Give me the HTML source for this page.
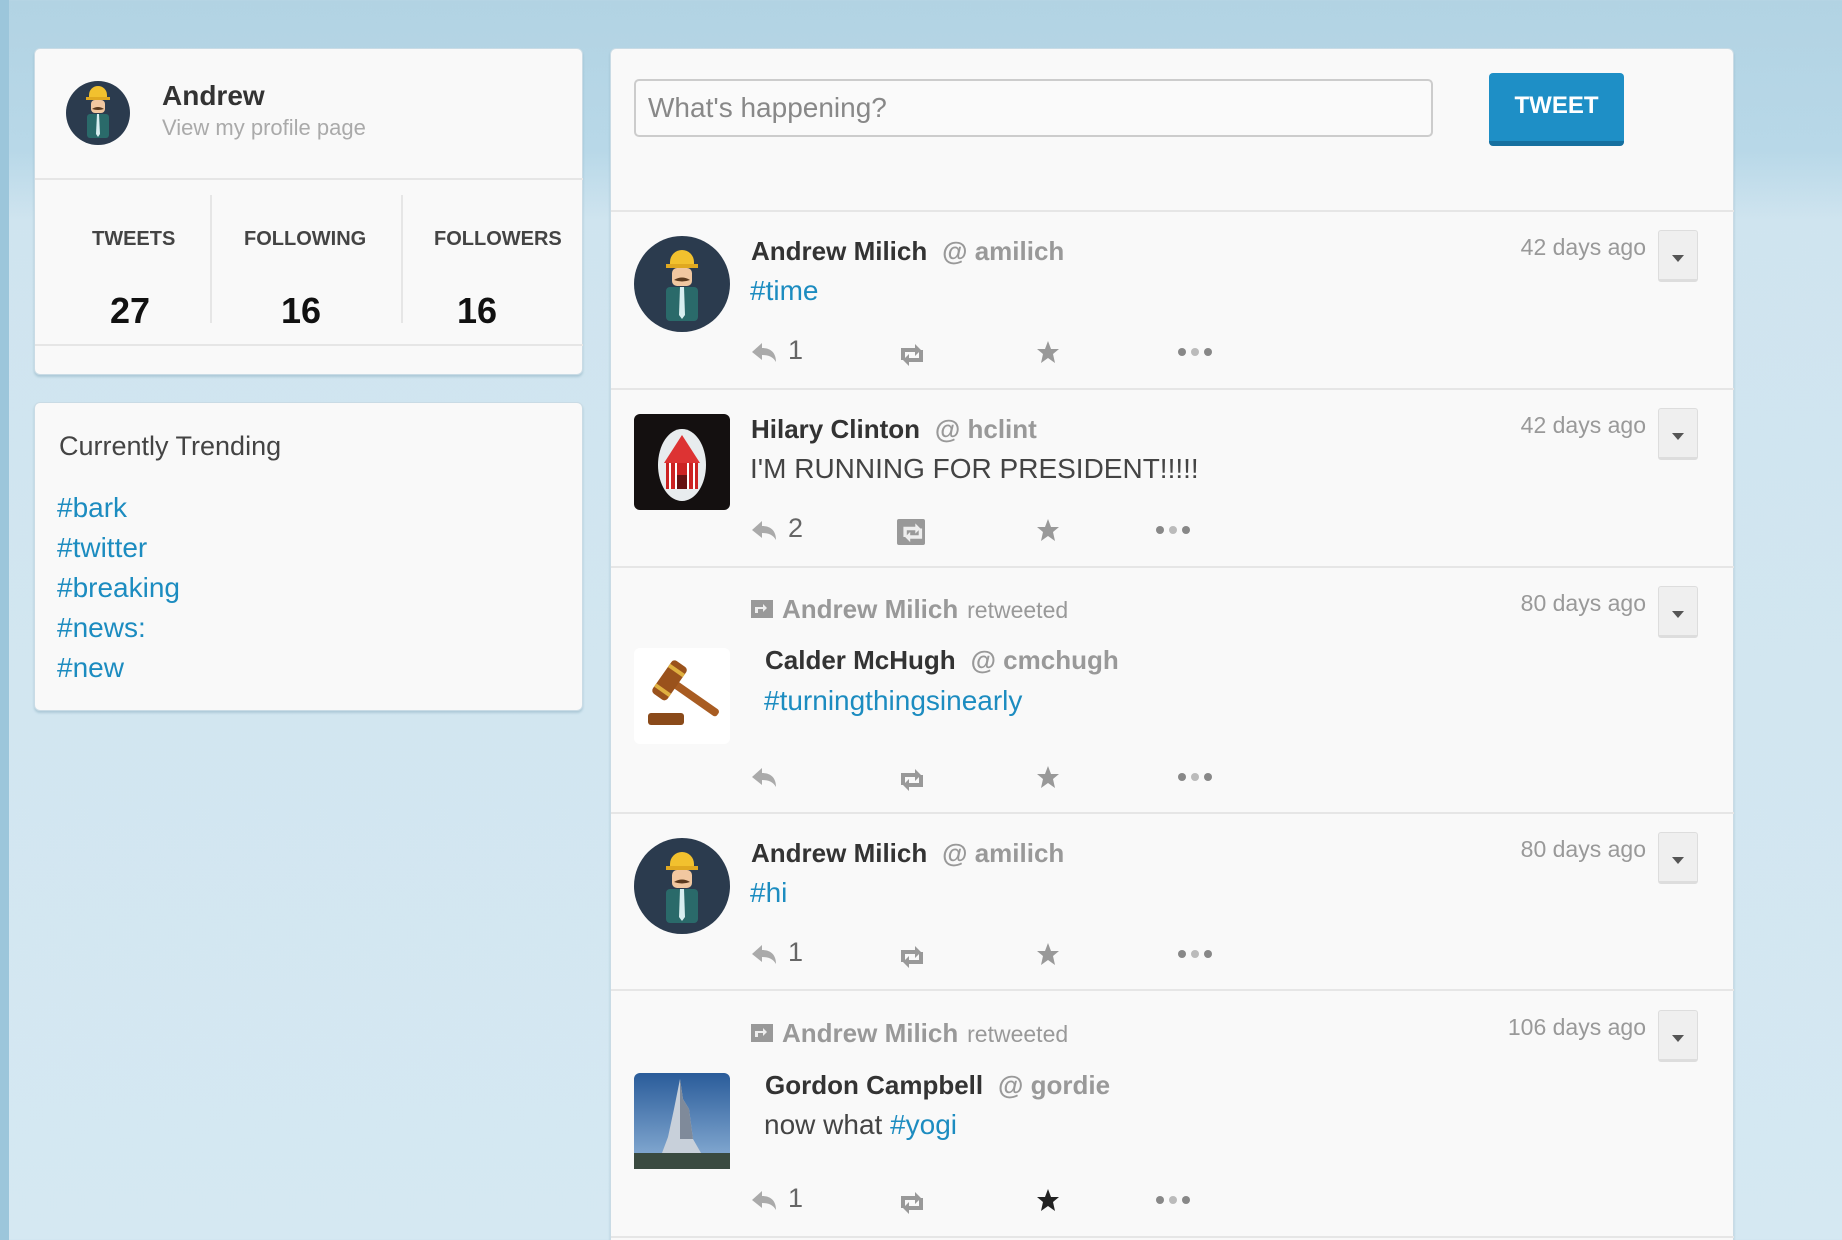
<!DOCTYPE html>
<html style="overflow:hidden;width:1842px;height:1240px"><head><meta charset="utf-8"><style>
*{margin:0;padding:0;box-sizing:border-box}
body{width:1842px;height:1240px;overflow:hidden;font-family:"Liberation Sans",Arial,sans-serif;background:linear-gradient(#b2d3e3 0,#b8d8e8 150px,#cfe4ef 220px,#d5e8f2 1240px);position:relative}
.a{position:absolute;white-space:nowrap}
.card{position:absolute;background:#f9f9f9;border:1px solid #c9dbe5;border-radius:6px;box-shadow:0 2px 2px rgba(120,160,180,.4)}
.hl{position:absolute;height:2px;background:#e6e6e6}
.vl{position:absolute;width:2px;background:#e6e6e6}
.blue{color:#1c8cc0}
.name{font-weight:bold;font-size:26px;color:#333}
.handle{font-weight:bold;font-size:26px;color:#999;margin-left:6px}
.time{font-size:23px;color:#999;text-align:right}
.dd{position:absolute;width:40px;height:52px;background:#efefef;border:1px solid #ddd;border-bottom:3px solid #ddd;border-radius:3px}
.dd:after{content:"";position:absolute;left:13px;top:24px;border-left:6px solid transparent;border-right:6px solid transparent;border-top:7px solid #555}
.cnt{font-size:27px;color:#666}
</style></head><body>
<div class="a" style="left:0;top:0;width:9px;height:1240px;background:#9cc6db"></div>

<div class="card" style="left:34px;top:48px;width:549px;height:327px"></div>
<svg class="a" style="left:66px;top:81px" width="64" height="64" viewBox="0 0 64 64"><circle cx="32" cy="32" r="32" fill="#2b3b4e"/><path d="M23 14a9 9 0 0118 0v3H23z" fill="#f2c12e"/><rect x="20" y="16" width="24" height="3" fill="#e0a820"/><rect x="25" y="19" width="14" height="13" rx="4" fill="#f1c7a0"/><path d="M26 28q6-4 12 0q-6 2-12 0" fill="#5b3a1e"/><rect x="21" y="33" width="22" height="24" rx="3" fill="#2a6a6a"/><path d="M31 33h2l1 20-2 3-2-3z" fill="#d8eef0"/></svg>
<div class="a" style="left:162px;top:80px;font-size:28px;font-weight:bold;color:#333">Andrew</div>
<div class="a" style="left:162px;top:115px;font-size:22px;color:#aaa">View my profile page</div>
<div class="hl" style="left:35px;top:178px;width:548px"></div>
<div class="vl" style="left:210px;top:195px;height:128px"></div>
<div class="vl" style="left:401px;top:195px;height:128px"></div>
<div class="a" style="left:92px;top:228px;font-size:20px;font-weight:bold;color:#444">TWEETS</div>
<div class="a" style="left:244px;top:228px;font-size:20px;font-weight:bold;color:#444">FOLLOWING</div>
<div class="a" style="left:434px;top:228px;font-size:20px;font-weight:bold;color:#444">FOLLOWERS</div>
<div class="a" style="left:110px;top:290px;font-size:36px;font-weight:bold;color:#111">27</div>
<div class="a" style="left:281px;top:290px;font-size:36px;font-weight:bold;color:#111">16</div>
<div class="a" style="left:457px;top:290px;font-size:36px;font-weight:bold;color:#111">16</div>
<div class="hl" style="left:35px;top:344px;width:548px"></div>

<div class="card" style="left:34px;top:402px;width:549px;height:309px"></div>
<div class="a" style="left:59px;top:431px;font-size:27px;color:#444">Currently Trending</div>
<div class="a blue" style="left:57px;top:488px;font-size:28px;line-height:40px">#bark<br>#twitter<br>#breaking<br>#news:<br>#new</div>

<div class="card" style="left:610px;top:48px;width:1124px;height:1200px"></div>
<div class="a" style="left:634px;top:79px;width:799px;height:58px;border:2px solid #ccc;border-radius:5px;background:#fafafa;font-size:28px;color:#888;padding:11px 12px">What's happening?</div>
<div class="a" style="left:1489px;top:73px;width:135px;height:73px;background:#1e8fc6;border-bottom:5px solid #1670a0;border-radius:4px;color:#fff;font-weight:bold;font-size:24px;text-align:center;line-height:66px">TWEET</div>

<div class="hl" style="left:611px;top:210px;width:1123px"></div>
<div class="hl" style="left:611px;top:388px;width:1123px"></div>
<div class="hl" style="left:611px;top:566px;width:1123px"></div>
<div class="hl" style="left:611px;top:812px;width:1123px"></div>
<div class="hl" style="left:611px;top:989px;width:1123px"></div>
<div class="hl" style="left:611px;top:1236px;width:1123px"></div>

<svg width="0" height="0" style="position:absolute"><defs>
<g id="av"><circle cx="48" cy="48" r="48" fill="#2b3b4e"/><path d="M36 26a12 12 0 0124 0v4H36z" fill="#f2c12e"/><rect x="32" y="28" width="32" height="4" fill="#e0a820"/><rect x="38" y="32" width="20" height="18" rx="5" fill="#f1c7a0"/><path d="M40 44q8-5 16 0q-8 3-16 0" fill="#5b3a1e"/><rect x="32" y="51" width="32" height="34" rx="4" fill="#2a6a6a"/><path d="M46 51h4l1 28-3 4-3-4z" fill="#d8eef0"/></g>
<g id="rp"><path d="M2 12l10-9v5c8 0 14 4 14 14c-3-5-7-7-14-7v5z" fill="#aaa"/></g>
<g id="rt"><path d="M4 8h14v-4l6 6-6 6v-4H8v8H4zM26 22H12v4l-6-6 6-6v4h10v-8h4z" fill="#999"/></g>
<g id="st"><path d="M11 0l3 8h8l-6 5 2 9-7-5-7 5 2-9-6-5h8z" fill="#999"/></g>
<g id="dt"><circle cx="4" cy="4" r="4" fill="#888"/><circle cx="17" cy="4" r="4" fill="#bbb"/><circle cx="30" cy="4" r="4" fill="#888"/></g>
</defs></svg>

<!-- tweet 1 -->
<svg class="a" style="left:634px;top:236px" width="96" height="96"><use href="#av"/></svg>
<div class="a" style="left:751px;top:236px"><span class="name">Andrew Milich</span>&nbsp;&nbsp;<span class="handle">@ amilich</span></div>
<div class="a blue" style="left:750px;top:275px;font-size:28px">#time</div>
<div class="a time" style="left:1446px;top:234px;width:200px">42 days ago</div>
<div class="dd" style="left:1658px;top:230px"></div>
<svg class="a" style="left:750px;top:340px" width="28" height="26"><use href="#rp"/></svg><div class="a cnt" style="left:788px;top:335px">1</div>
<svg class="a" style="left:897px;top:340px" width="30" height="28"><use href="#rt"/></svg>
<svg class="a" style="left:1037px;top:341px" width="22" height="22"><use href="#st"/></svg>
<svg class="a" style="left:1178px;top:348px" width="36" height="9"><use href="#dt"/></svg>

<!-- tweet 2 -->
<div class="a" style="left:634px;top:414px;width:96px;height:96px;background:#141010;border-radius:6px"></div>
<svg class="a" style="left:655px;top:423px" width="54" height="80"><ellipse cx="27" cy="42" rx="24" ry="36" fill="#e8ecee"/><path d="M27 12l-18 28h36z" fill="#d33"/><rect x="11" y="40" width="32" height="26" fill="#c22"/><path d="M15 40v26M21 40v26M33 40v26M39 40v26" stroke="#fff" stroke-width="2"/><rect x="22" y="52" width="10" height="14" fill="#611"/></svg>
<div class="a" style="left:751px;top:414px"><span class="name">Hilary Clinton</span>&nbsp;&nbsp;<span class="handle">@ hclint</span></div>
<div class="a" style="left:750px;top:453px;font-size:28px;color:#444">I'M RUNNING FOR PRESIDENT!!!!!</div>
<div class="a time" style="left:1446px;top:412px;width:200px">42 days ago</div>
<div class="dd" style="left:1658px;top:408px"></div>
<svg class="a" style="left:750px;top:518px" width="28" height="26"><use href="#rp"/></svg><div class="a cnt" style="left:788px;top:513px">2</div>
<div class="a" style="left:897px;top:519px;width:28px;height:26px;background:#999;border-radius:2px"></div>
<svg class="a" style="left:898px;top:519px" width="30" height="28"><g transform="translate(2,1) scale(0.85)"><path d="M4 8h14v-4l6 6-6 6v-4H8v8H4zM26 22H12v4l-6-6 6-6v4h10v-8h4z" fill="#eee"/></g></svg>
<svg class="a" style="left:1037px;top:519px" width="22" height="22"><use href="#st"/></svg>
<svg class="a" style="left:1156px;top:526px" width="36" height="9"><use href="#dt"/></svg>

<!-- tweet 3 -->
<svg class="a" style="left:750px;top:599px" width="24" height="20"><rect x="1" y="1" width="22" height="18" fill="#999"/><path d="M5 8h8v-3l4 4-4 4v-3H8v4H5z" fill="#eee"/></svg>
<div class="a" style="left:782px;top:594px"><span style="font-weight:bold;font-size:26px;color:#999">Andrew Milich</span>&nbsp;&nbsp;<span style="font-size:23px;color:#999">retweeted</span></div>
<div class="a time" style="left:1446px;top:590px;width:200px">80 days ago</div>
<div class="dd" style="left:1658px;top:586px"></div>
<div class="a" style="left:634px;top:648px;width:96px;height:96px;background:#fff;border-radius:6px"></div>
<svg class="a" style="left:640px;top:655px" width="86" height="80"><rect x="8" y="58" width="36" height="12" rx="3" fill="#8a4a1a"/><g transform="rotate(35 40 40)"><rect x="22" y="30" width="60" height="8" rx="3" fill="#a85c22"/><rect x="14" y="14" width="18" height="40" rx="4" fill="#9a521c"/><rect x="14" y="20" width="18" height="4" fill="#e0b040"/><rect x="14" y="44" width="18" height="4" fill="#e0b040"/></g></svg>
<div class="a" style="left:765px;top:645px"><span class="name">Calder McHugh</span>&nbsp;&nbsp;<span class="handle">@ cmchugh</span></div>
<div class="a blue" style="left:764px;top:685px;font-size:28px">#turningthingsinearly</div>
<svg class="a" style="left:750px;top:765px" width="28" height="26"><use href="#rp"/></svg>
<svg class="a" style="left:897px;top:765px" width="30" height="28"><use href="#rt"/></svg>
<svg class="a" style="left:1037px;top:766px" width="22" height="22"><use href="#st"/></svg>
<svg class="a" style="left:1178px;top:773px" width="36" height="9"><use href="#dt"/></svg>

<!-- tweet 4 -->
<svg class="a" style="left:634px;top:838px" width="96" height="96"><use href="#av"/></svg>
<div class="a" style="left:751px;top:838px"><span class="name">Andrew Milich</span>&nbsp;&nbsp;<span class="handle">@ amilich</span></div>
<div class="a blue" style="left:750px;top:877px;font-size:28px">#hi</div>
<div class="a time" style="left:1446px;top:836px;width:200px">80 days ago</div>
<div class="dd" style="left:1658px;top:832px"></div>
<svg class="a" style="left:750px;top:942px" width="28" height="26"><use href="#rp"/></svg><div class="a cnt" style="left:788px;top:937px">1</div>
<svg class="a" style="left:897px;top:942px" width="30" height="28"><use href="#rt"/></svg>
<svg class="a" style="left:1037px;top:943px" width="22" height="22"><use href="#st"/></svg>
<svg class="a" style="left:1178px;top:950px" width="36" height="9"><use href="#dt"/></svg>

<!-- tweet 5 -->
<svg class="a" style="left:750px;top:1023px" width="24" height="20"><rect x="1" y="1" width="22" height="18" fill="#999"/><path d="M5 8h8v-3l4 4-4 4v-3H8v4H5z" fill="#eee"/></svg>
<div class="a" style="left:782px;top:1018px"><span style="font-weight:bold;font-size:26px;color:#999">Andrew Milich</span>&nbsp;&nbsp;<span style="font-size:23px;color:#999">retweeted</span></div>
<div class="a time" style="left:1446px;top:1014px;width:200px">106 days ago</div>
<div class="dd" style="left:1658px;top:1010px"></div>
<svg class="a" style="left:634px;top:1073px" width="96" height="96"><defs><linearGradient id="sky" x1="0" y1="0" x2="0" y2="1"><stop offset="0" stop-color="#2a5c9a"/><stop offset="1" stop-color="#8fb3d8"/></linearGradient></defs><rect width="96" height="96" rx="6" fill="url(#sky)"/><path d="M46 6l3 20 6 10 4 30 8 14H28l6-16 6-28z" fill="#c8d0da"/><path d="M46 6l3 20 6 10 4 30H46z" fill="#7f8a9a"/><rect x="0" y="80" width="96" height="16" fill="#3a4a40"/></svg>
<div class="a" style="left:765px;top:1070px"><span class="name">Gordon Campbell</span>&nbsp;&nbsp;<span class="handle">@ gordie</span></div>
<div class="a" style="left:764px;top:1109px;font-size:28px;color:#444">now what <span class="blue">#yogi</span></div>
<svg class="a" style="left:750px;top:1188px" width="28" height="26"><use href="#rp"/></svg><div class="a cnt" style="left:788px;top:1183px">1</div>
<svg class="a" style="left:897px;top:1188px" width="30" height="28"><use href="#rt"/></svg>
<svg class="a" style="left:1037px;top:1189px" width="22" height="22"><path d="M11 0l3 8h8l-6 5 2 9-7-5-7 5 2-9-6-5h8z" fill="#222"/></svg>
<svg class="a" style="left:1156px;top:1196px" width="36" height="9"><use href="#dt"/></svg>
</body></html>
